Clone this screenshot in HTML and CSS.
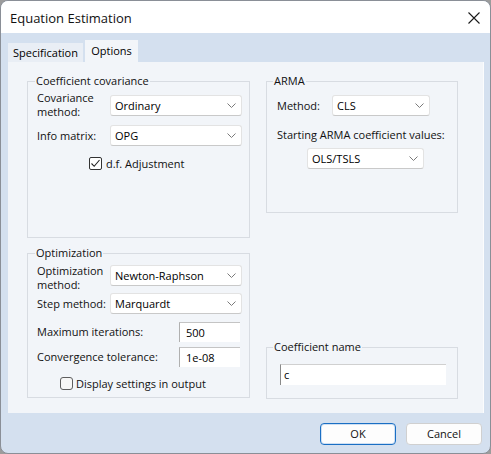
FILE: index.html
```html
<!DOCTYPE html>
<html>
<head>
<meta charset="utf-8">
<title>Equation Estimation</title>
<link rel="stylesheet" href="styles.css">
</head>
<body>
<div class="window">
  <div class="titlebar">
    <span class="title">Equation Estimation</span>
    <svg class="close" width="12" height="12" viewBox="0 0 12 12"><path d="M0.5 0.5 L11.5 11.5 M11.5 0.5 L0.5 11.5" stroke="#1a1a1a" stroke-width="1.1" fill="none"/></svg>
  </div>
  <div class="client">
    <div class="tabs">
      <div class="tab spec">Specification</div>
      <div class="tab opts">Options</div>
    </div>
    <div class="panel">
      <div class="col col-left">
        <fieldset class="group cov">
          <legend>Coefficient covariance</legend>
          <div class="row cov-r1">
            <div class="lbl lbl-cov">Covariance<br>method:</div>
            <div class="combo w131"><span>Ordinary</span><svg class="chev" width="9" height="5" viewBox="0 0 9 5"><polyline points="0.5,0.5 4.5,4.5 8.5,0.5" fill="none" stroke="#7a7a7a" stroke-width="1"/></svg></div>
          </div>
          <div class="row cov-r2">
            <div class="lbl lbl-cov">Info matrix:</div>
            <div class="combo w131"><span>OPG</span><svg class="chev" width="9" height="5" viewBox="0 0 9 5"><polyline points="0.5,0.5 4.5,4.5 8.5,0.5" fill="none" stroke="#7a7a7a" stroke-width="1"/></svg></div>
          </div>
          <div class="checkrow cov-r3">
            <span class="cb checked"><svg width="11" height="11" viewBox="0 0 11 11"><polyline points="1.5,5.5 4.2,8.3 9.5,2" fill="none" stroke="#222" stroke-width="1.1"/></svg></span>
            <span class="cbtext">d.f. Adjustment</span>
          </div>
        </fieldset>
        <fieldset class="group opt">
          <legend>Optimization</legend>
          <div class="row opt-r1">
            <div class="lbl lbl-cov">Optimization<br>method:</div>
            <div class="combo w131 drop1"><span>Newton-Raphson</span><svg class="chev" width="9" height="5" viewBox="0 0 9 5"><polyline points="0.5,0.5 4.5,4.5 8.5,0.5" fill="none" stroke="#7a7a7a" stroke-width="1"/></svg></div>
          </div>
          <div class="row opt-r2">
            <div class="lbl lbl-cov">Step method:</div>
            <div class="combo w131"><span>Marquardt</span><svg class="chev" width="9" height="5" viewBox="0 0 9 5"><polyline points="0.5,0.5 4.5,4.5 8.5,0.5" fill="none" stroke="#7a7a7a" stroke-width="1"/></svg></div>
          </div>
          <div class="row opt-r3">
            <div class="lbl lbl-long">Maximum iterations:</div>
            <div class="edit w61">500</div>
          </div>
          <div class="row opt-r4">
            <div class="lbl lbl-long">Convergence tolerance:</div>
            <div class="edit w61">1e-08</div>
          </div>
          <div class="checkrow opt-r5">
            <span class="cb"></span>
            <span class="cbtext">Display settings in output</span>
          </div>
        </fieldset>
      </div>
      <div class="col col-right">
        <fieldset class="group arma">
          <legend>ARMA</legend>
          <div class="row arma-r1">
            <div class="lbl lbl-method">Method:</div>
            <div class="combo w98"><span>CLS</span><svg class="chev" width="9" height="5" viewBox="0 0 9 5"><polyline points="0.5,0.5 4.5,4.5 8.5,0.5" fill="none" stroke="#7a7a7a" stroke-width="1"/></svg></div>
          </div>
          <div class="arma-r2">Starting ARMA coefficient values:</div>
          <div class="row arma-r3">
            <div class="combo w117"><span>OLS/TSLS</span><svg class="chev" width="9" height="5" viewBox="0 0 9 5"><polyline points="0.5,0.5 4.5,4.5 8.5,0.5" fill="none" stroke="#7a7a7a" stroke-width="1"/></svg></div>
          </div>
        </fieldset>
        <fieldset class="group coef">
          <legend>Coefficient name</legend>
          <div class="edit coef-edit">c</div>
        </fieldset>
      </div>
    </div>
    <div class="buttons">
      <div class="btn default">OK</div>
      <div class="btn">Cancel</div>
    </div>
  </div>
</div>
</body>
</html>
```
FILE: styles.css
```css
html, body {
  margin: 0;
  padding: 0;
  background: #9c9c9c;
}
body {
  font-family: "Segoe UI", "Open Sans", "Noto Sans", sans-serif;
  font-size: 11px;
  color: #000;
}
.window {
  width: 491px;
  height: 454px;
  box-sizing: border-box;
  border: 1px solid #8a8f97;
  border-radius: 8px;
  overflow: hidden;
  display: flex;
  flex-direction: column;
  background: #d4e0ef;
}
.titlebar {
  height: 32px;
  flex: none;
  background: #ffffff;
  display: flex;
  align-items: center;
  justify-content: space-between;
  padding: 0 10px 0 9px;
}
.title {
  font-size: 13px;
  color: #111;
  padding-top: 1px;
}
.close {
  display: block;
  margin-top: 1px;
}
.client {
  flex: 1;
  display: flex;
  flex-direction: column;
  padding: 7px 7px 0 7px;
}
.tabs {
  display: flex;
  align-items: flex-end;
  gap: 2px;
  height: 22px;
}
.tab {
  text-align: center;
  box-sizing: border-box;
}
.tab.spec {
  width: 75px;
  height: 19px;
  line-height: 19px;
  background: #e9eef5;
}
.tab.opts {
  width: 53px;
  height: 22px;
  line-height: 21px;
  background: #f2f5f9;
}
.panel {
  width: 476px;
  height: 351px;
  box-sizing: border-box;
  background: #f2f5f9;
  border-right: 1px solid #fbfcfd;
  display: flex;
  gap: 16px;
  padding: 11px 0 0 19px;
}
.col {
  display: flex;
  flex-direction: column;
}
.col-left { width: 223px; }
.col-right {
  width: 192px;
  justify-content: space-between;
  height: 326px;
}
.group {
  margin: 0;
  border: 1px solid #d8dce2;
  box-sizing: border-box;
  padding: 0 7px 0 9px;
  min-width: 0;
}
.group legend {
  padding: 0 1px;
  margin-left: -2px;
  line-height: 16px;
  color: #111;
}
.cov { height: 165px; }
.opt { height: 153px; margin-top: 7px; }
.arma { height: 140px; padding-left: 10px; }
.coef { height: 60px; padding-left: 10px; }
.arma legend, .coef legend { margin-left: -4px; }

.row {
  display: flex;
  align-items: center;
}
.lbl {
  line-height: 14px;
  color: #111;
}
.lbl-cov { width: 73px; flex: none; }
.lbl-long { width: 142px; flex: none; }
.lbl-method { width: 55px; flex: none; }

.combo {
  height: 21px;
  box-sizing: border-box;
  background: #ffffff;
  border: 1px solid #e3e3e3;
  border-bottom-color: #c9c9c9;
  border-radius: 3px;
  display: flex;
  align-items: center;
  justify-content: space-between;
  padding: 0 5px 0 4px;
  flex: none;
}
.chev { display: block; }
.w131 { width: 132px; }
.w98 { width: 98px; }
.w117 { width: 117px; }

.edit {
  height: 20px;
  box-sizing: border-box;
  background: #ffffff;
  border-top: 1px solid #c4c4c4;
  border-left: 1px solid #b0b0b0;
  line-height: 19px;
  padding-left: 6px;
  flex: none;
}
.w61 { width: 61px; }

.cov-r1 { margin-top: 2px; }
.cov-r2 { margin-top: 6px; }
.cov-r3 { margin-top: 10px; padding-left: 52px; }

.opt-r1 { margin-top: 3px; align-items: flex-start; }
.drop1 { margin-top: 1px; }
.opt-r2 { margin-top: 1px; }
.opt-r3 { margin-top: 8px; }
.opt-r4 { margin-top: 5px; }
.opt-r5 { margin-top: 9px; padding-left: 23px; }
.opt-r5 .cbtext { margin-left: 3px; }

.checkrow {
  display: flex;
  align-items: center;
  height: 15px;
}
.cb {
  width: 13px;
  height: 13px;
  box-sizing: border-box;
  border: 1px solid #5e5e5e;
  border-radius: 3px;
  background: #f7f7f7;
  display: flex;
  align-items: center;
  justify-content: center;
  flex: none;
}
.cb.checked {
  border-color: #333;
  border-radius: 2px;
  background: #fff;
}
.cb svg { display: block; }
.cbtext { margin-left: 4px; color: #111; }

.arma-r1 { margin-top: 6px; }
.arma-r2 { margin-top: 12px; line-height: 14px; color: #111; }
.arma-r3 { margin-top: 6px; padding-left: 30px; }

.coef-edit {
  margin-top: 9px;
  margin-left: 3px;
  width: 166px;
  height: 21px;
  padding-left: 3px;
  line-height: 20px;
  border-top-color: #d0d0d0;
  border-left-color: #8a8a8a;
}

.buttons {
  display: flex;
  justify-content: flex-end;
  gap: 10px;
  padding: 10px 1px 0 0;
}
.btn {
  width: 76px;
  height: 22px;
  box-sizing: border-box;
  border: 1px solid #d0d0d0;
  border-radius: 4px;
  background: #fdfdfd;
  text-align: center;
  line-height: 20px;
  color: #111;
}
.btn.default {
  border-color: #1a6fc4;
  box-shadow: inset 0 0 0 1px #cfe0f3;
}
```
